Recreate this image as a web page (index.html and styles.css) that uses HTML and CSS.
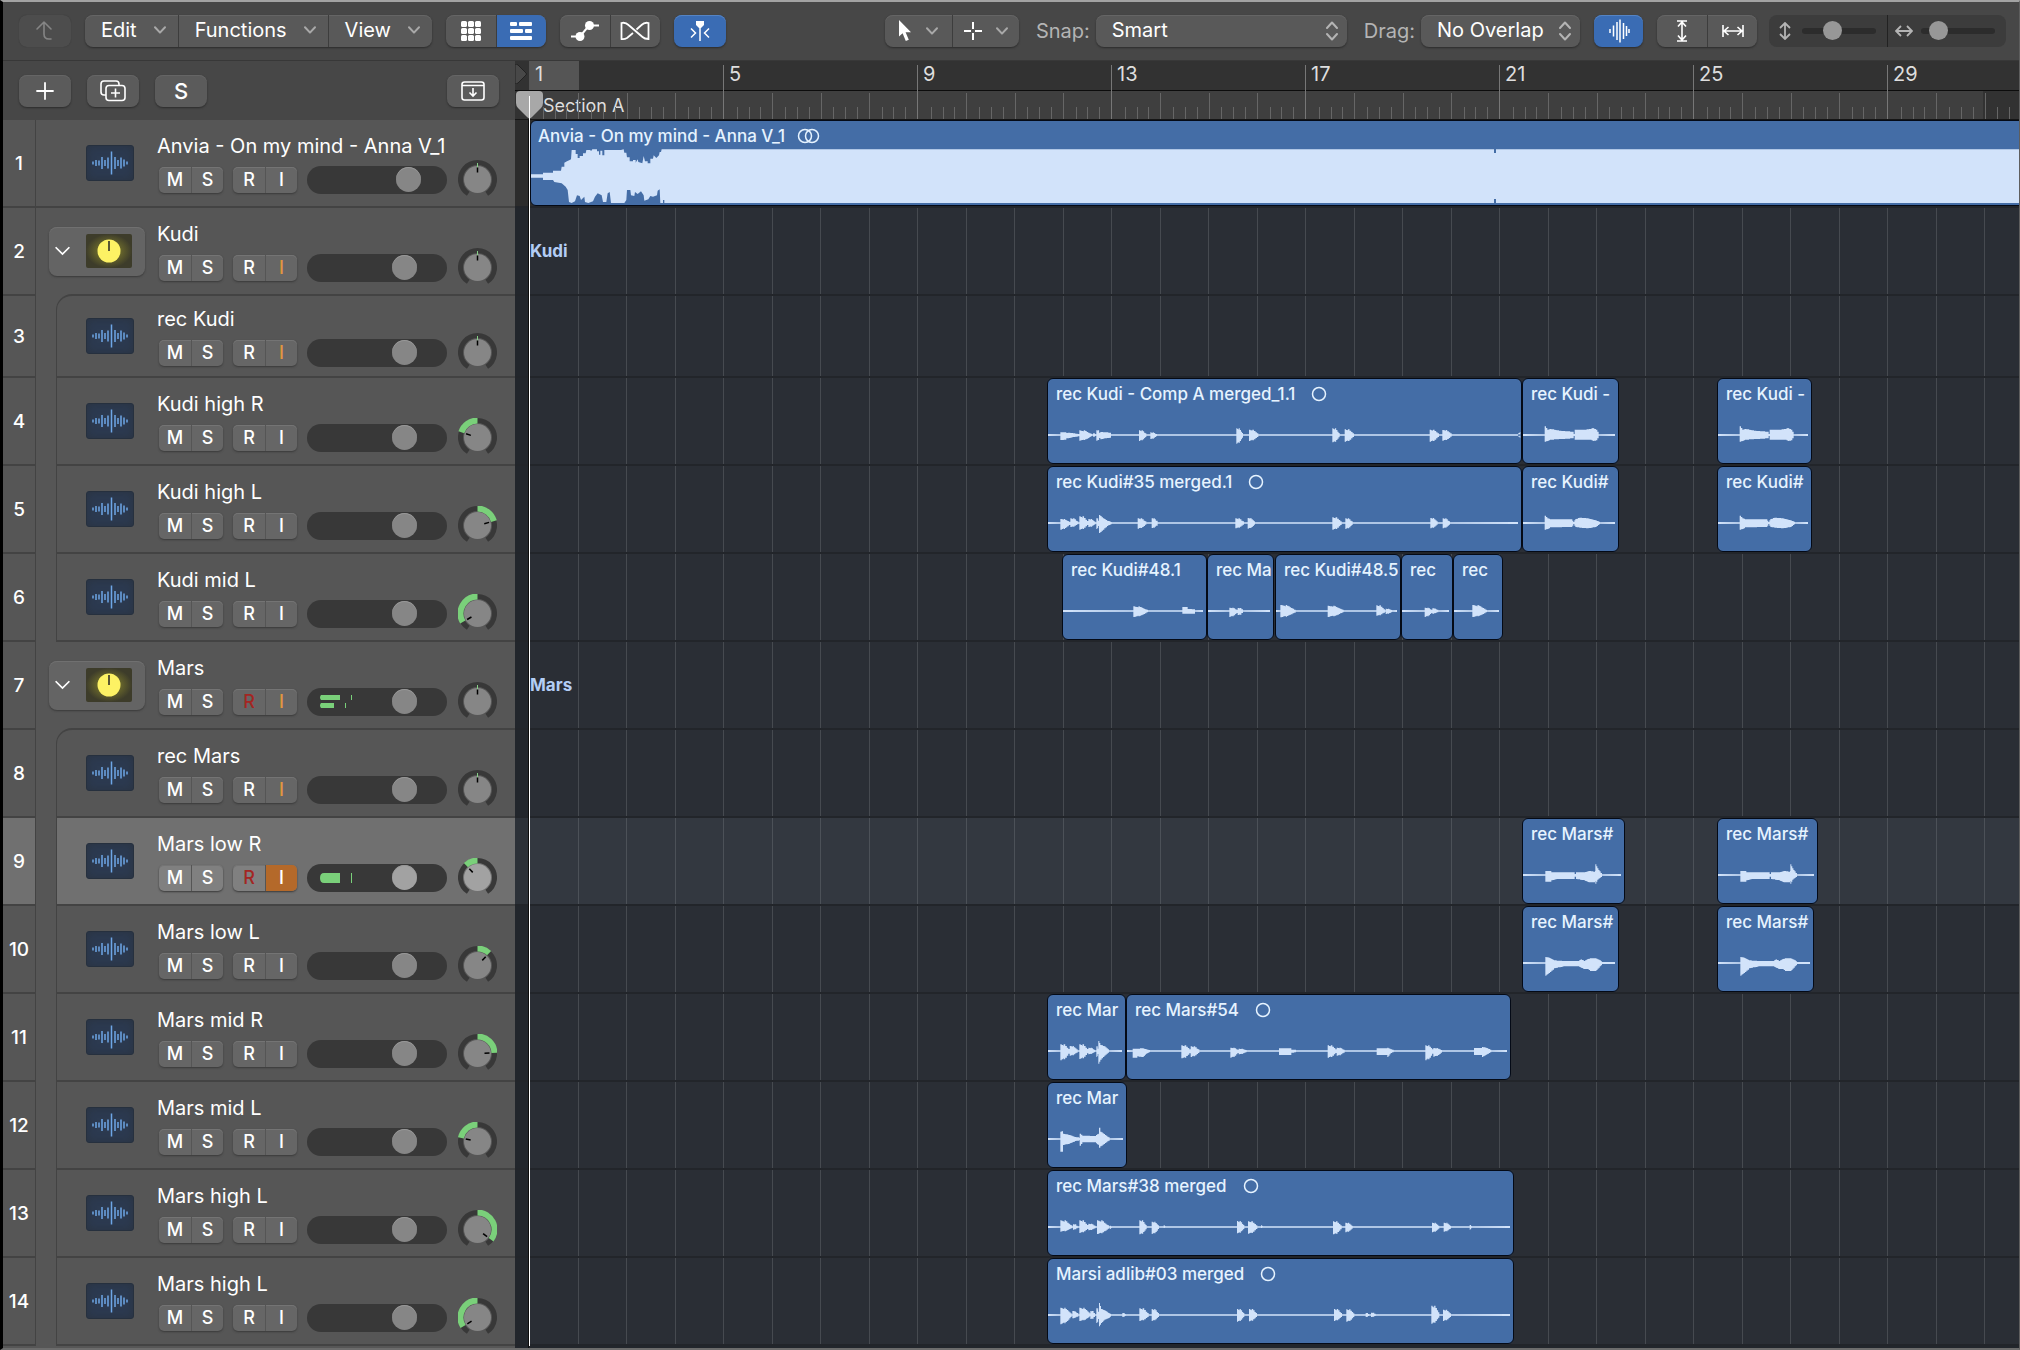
FILE: index.html
```html
<!DOCTYPE html>
<html lang="en">
<head>
<meta charset="utf-8">
<title>Tracks</title>
<link rel="stylesheet" href="styles.css">
</head>
<body>
<svg class="defs" aria-hidden="true">
  <symbol id="i-chev" viewBox="0 0 12 8"><path d="M1 1.2 6 6.6 11 1.2" fill="none" stroke="currentColor" stroke-width="2" stroke-linecap="round" stroke-linejoin="round"/></symbol>
  <symbol id="i-updown" viewBox="0 0 12 20"><path d="M1 7 6 1.5 11 7M1 13l5 5.5 5-5.5" fill="none" stroke="currentColor" stroke-width="2" stroke-linecap="round" stroke-linejoin="round"/></symbol>
  <symbol id="i-wave" viewBox="0 0 48 36">
    <path d="M7 16.500v3M10 15v6M13 15.500v5M16 12v12M19 15v6M22 12.500v11M25.500 6.500v23M29 12v12M32 15v6M35 12.500v11M38 14.500v7M41 16.500v3" fill="none" stroke="currentColor" stroke-width="1.500"/>
  </symbol>
</svg>
<div class="app">
  <header class="toolbar">
    <button class="btn btn-off" aria-label="Go up" disabled><svg width="20" height="22" viewBox="0 0 20 22"><path d="M2 9 9 2l7 7M9 2v12q0 5 5 5h2" fill="none" stroke="currentColor" stroke-width="1.600" stroke-linecap="round" stroke-linejoin="round"/></svg></button>
    <div class="group">
      <button class="menu">Edit<svg width="12" height="8"><use href="#i-chev"/></svg></button>
      <button class="menu">Functions<svg width="12" height="8"><use href="#i-chev"/></svg></button>
      <button class="menu">View<svg width="12" height="8"><use href="#i-chev"/></svg></button>
    </div>
    <div class="group">
      <button class="tool" aria-label="Grid view"><svg width="20" height="20" viewBox="0 0 20 20" fill="currentColor"><rect width="6" height="6" rx="1.500"/><rect x="7" width="6" height="6" rx="1.500"/><rect x="14" width="6" height="6" rx="1.500"/><rect y="7" width="6" height="6" rx="1.500"/><rect x="7" y="7" width="6" height="6" rx="1.500"/><rect x="14" y="7" width="6" height="6" rx="1.500"/><rect y="14" width="6" height="6" rx="1.500"/><rect x="7" y="14" width="6" height="6" rx="1.500"/><rect x="14" y="14" width="6" height="6" rx="1.500"/></svg></button>
      <button class="tool on" aria-label="Tracks view"><svg width="24" height="18" viewBox="0 0 24 18" fill="currentColor"><rect x="1" width="7" height="4" rx="1"/><rect x="10" width="13" height="4" rx="1"/><rect x="1" y="7" width="13" height="4" rx="1"/><rect x="16" y="7" width="7" height="4" rx="1"/><rect x="1" y="14" width="22" height="4" rx="1"/></svg></button>
    </div>
    <div class="group">
      <button class="tool" aria-label="Automation"><svg width="30" height="20" viewBox="0 0 30 20"><path d="M1 15.500h9L19 4.500h10" fill="none" stroke="currentColor" stroke-width="2"/><circle cx="10" cy="15.500" r="4.500" fill="currentColor"/><circle cx="19.500" cy="4.500" r="4.500" fill="currentColor"/></svg></button>
      <button class="tool" aria-label="Flex"><svg width="30" height="20" viewBox="0 0 30 20"><path d="M13 12 7 17Q4.500 18.500 1.500 18V2q4-1 7 2l14 12q2 2 6 2V2q-4-1-7 2l-5 4.500" fill="none" stroke="currentColor" stroke-width="1.800"/></svg></button>
    </div>
    <button class="btn on" aria-label="Catch playhead"><svg width="22" height="22" viewBox="0 0 22 22"><path d="M7 1h8v4l-3 3h-2L7 5z" fill="currentColor"/><path d="M11 6v15M2 8.500l4.500 4.500L2 17.500M20 8.500 15.500 13l4.500 4.500" fill="none" stroke="currentColor" stroke-width="1.500"/></svg></button>

    <div class="group right">
      <button class="tool wide" aria-label="Pointer tool"><svg width="14" height="22" viewBox="0 0 14 22"><path d="M1 0v16.500l3.600-3.300 3.200 7.800 3-1.200-3.200-7.600H13z" fill="currentColor"/></svg><svg class="dim" width="12" height="8"><use href="#i-chev"/></svg></button>
      <button class="tool wide" aria-label="Marquee tool"><svg width="18" height="18" viewBox="0 0 18 18"><path d="M9 0v7M9 11v7M0 9h7M11 9h7" stroke="currentColor" stroke-width="2"/></svg><svg class="dim" width="12" height="8"><use href="#i-chev"/></svg></button>
    </div>
    <label class="field" for="snap">Snap:
      <span class="pick pick-wide"><select id="snap"><option>Smart</option></select><svg width="12" height="20"><use href="#i-updown"/></svg></span>
    </label>
    <label class="field" for="drag">Drag:
      <span class="pick"><select id="drag"><option>No Overlap</option></select><svg width="12" height="20"><use href="#i-updown"/></svg></span>
    </label>
    <button class="btn slim on" aria-label="Waveform zoom"><svg width="22" height="24" viewBox="0 0 22 24"><path d="M2 10v4M5.500 6.500v11M9 3v18M12 .500v23M15.500 4v16M18.500 7v10M21 10v4" stroke="currentColor" stroke-width="1.500"/></svg></button>
    <div class="group">
      <button class="tool" aria-label="Zoom vertically"><svg width="12" height="22" viewBox="0 0 12 22"><path d="M1 1h10M1 21h10M6 2v18M2 6.500 6 2l4 4.500M2 15.500 6 20l4-4.500" fill="none" stroke="currentColor" stroke-width="1.600"/></svg></button>
      <button class="tool" aria-label="Zoom horizontally"><svg width="22" height="12" viewBox="0 0 22 12"><path d="M1 0v12M21 0v12M2 6h18M6.500 2 2 6l4.500 4M15.500 2 20 6l-4.500 4" fill="none" stroke="currentColor" stroke-width="1.600"/></svg></button>
    </div>
    <div class="zooms">
      <label><svg width="18" height="18" viewBox="0 0 18 18"><path d="M9 1v16M4 6l5-5 5 5M4 12l5 5 5-5" fill="none" stroke="currentColor" stroke-width="1.800"/></svg><input class="zoom" type="range" value="38" aria-label="Vertical zoom"></label>
      <label><svg width="18" height="18" viewBox="0 0 18 18"><path d="M1 9h16M6 4 1 9l5 5M12 4l5 5-5 5" fill="none" stroke="currentColor" stroke-width="1.800"/></svg><input class="zoom" type="range" value="14" aria-label="Horizontal zoom"></label>
    </div>
  </header>

  <main class="main">
    <section class="side" aria-label="Track headers">
      <div class="side-bar">
        <button class="btn" aria-label="Add track"><svg width="18" height="18" viewBox="0 0 18 18"><path d="M9 1v16M1 9h16" stroke="currentColor" stroke-width="1.800" stroke-linecap="round"/></svg></button>
        <button class="btn" aria-label="Duplicate track"><svg width="26" height="22" viewBox="0 0 26 22"><path d="M6 15H4q-3 0-3-3V4q0-3 3-3h12q3 0 3 3v1" fill="none" stroke="currentColor" stroke-width="1.600"/><rect x="6" y="5.500" width="19" height="15" rx="3" fill="none" stroke="currentColor" stroke-width="1.600"/><path d="M15.500 8.500v9M11 13h9" stroke="currentColor" stroke-width="1.600"/></svg></button>
        <button class="btn solo">S</button>
        <button class="btn right" aria-label="Header options"><svg width="24" height="20" viewBox="0 0 24 20"><rect x="1" y="1" width="22" height="18" rx="2.500" fill="none" stroke="currentColor" stroke-width="1.600"/><path d="M1 4.500h22M12 7v8M8.500 11.500 12 15l3.500-3.500" fill="none" stroke="currentColor" stroke-width="1.600"/></svg></button>
      </div>
      <div id="headers"></div>
    </section>
    <section class="time" aria-label="Timeline">
      <div class="ruler">
        <div class="numbers" id="numbers"></div>
        <div class="markers"><span class="marker">Section A</span></div>
        <div class="ticks" id="ticks"></div>
        <svg class="start" width="12" height="20" viewBox="0 0 12 20"><path d="M0 0q2 0 3 1l8 8q1 1 0 2l-8 8q-1 1-3 1z" fill="#484848" stroke="#222"/></svg>
      </div>
      <div class="lanes">
        <div class="gridlines" id="gridlines"></div>
        <div id="lanes"></div>
      </div>
      <div class="playhead"><svg width="27" height="28" viewBox="0 0 27 28"><path d="M4 0h19q4 0 4 4v8q0 3-2 5l-9 9q-2.500 2.500-5 0l-9-9q-2-2-2-5V4q0-4 4-4z" fill="#a8a8a8"/></svg></div>
    </section>
  </main>
</div>
<script src="tracks.js"></script>
</body>
</html>
```
FILE: styles.css
```css
* { box-sizing: border-box; }
:root {
  --row: 88px;
  --row-short: 82px;
  --panel: #565656;
  --bar: #474747;
  --line: #434343;
  --blue: #3a6cb4;
  --font: Inter, "Liberation Sans", sans-serif;
}
body { margin: 0; background: #000; color: #fff; font-family: var(--font); font-size: 20px; }
button, select, input { font: inherit; color: inherit; margin: 0; }
button { border: 0; padding: 0; background: none; }
svg { display: block; flex: none; }
.defs { position: absolute; width: 0; height: 0; }
.app {
  display: flex; flex-direction: column; min-height: 100vh; overflow: hidden;
  border-top: 2px solid #a3a3a3; border-left: 3px solid #000;
  border-right: 1px solid #5e5e5e; border-bottom: 2px solid #6c6c6c;
}

/* toolbar */
.toolbar {
  display: flex; align-items: center; gap: 14px; height: 59px;
  padding: 0 13px 0 16px; background: var(--bar); border-bottom: 1px solid #383838;
}
.right { margin-left: auto; }
.btn, .group {
  display: flex; align-items: center; justify-content: center; height: 32px;
  background: #595959; border-radius: 8px; box-shadow: 0 1px 2px #2c2c2c, inset 0 1px 0 #656565;
}
.btn { width: 52px; }
.slim { width: 49px; }
.btn-off { background: #4d4d4d; color: #858585; box-shadow: 0 0 1px #333; }
.btn.on, .tool.on { background: var(--blue); }
.btn.on { box-shadow: 0 1px 2px #2c2c2c, inset 0 1px 0 #5584c4; }
.group { overflow: hidden; }
.group > * + * { border-left: 1px solid #3d3d3d; }
.menu, .tool { display: flex; align-items: center; justify-content: center; height: 32px; }
.menu { gap: 17px; padding: 0 12px 2px 16px; }
.menu svg, .dim { color: #a8a8a8; }
.tool { width: 50px; }
.wide { width: 67px; gap: 14px; }
.field { display: flex; align-items: center; gap: 6px; color: #b4b4b4; padding-left: 3px; }
.pick { position: relative; width: 159px; color: #fff; }
.pick-wide { width: 251px; }
.pick select {
  appearance: none; display: block; width: 100%; height: 32px; padding: 0 30px 2px 16px; border: 0;
  border-radius: 8px; background: #595959; box-shadow: 0 1px 2px #2c2c2c, inset 0 1px 0 #656565;
}
.pick svg { position: absolute; right: 9px; top: 6px; color: #b4b4b4; pointer-events: none; }
.zooms { display: flex; height: 32px; margin-left: -2px; border-radius: 8px; background: #3c3c3c; }
.zooms label { display: flex; align-items: center; gap: 8px; padding: 0 11px 0 7px; color: #b4b4b4; }
.zooms label + label { border-left: 1px solid #222; }
.zoom { appearance: none; width: 74px; height: 20px; background: none; }
.zoom::-webkit-slider-runnable-track { height: 6px; border-radius: 3px; background: #2c2c2c; }
.zoom::-webkit-slider-thumb { appearance: none; width: 19px; height: 19px; margin-top: -7px; border-radius: 50%; background: #979797; }

.main { display: flex; flex: 1; }

/* track headers */
.side { width: 512px; flex: none; background: var(--panel); }
.side-bar { display: flex; align-items: center; gap: 16px; height: 59px; padding: 0 16px; background: var(--bar); }
.side-bar .btn { background: #5b5b5b; }
.solo { font-size: 22px; font-weight: 500; }
.track { display: flex; height: var(--row); }
.short { height: var(--row-short); }
.num {
  display: flex; align-items: center; justify-content: center; width: 33px; flex: none; font-size: 19px; font-weight: 500;
  border-right: 1px solid var(--line); border-bottom: 2px solid var(--line);
}
.body { display: flex; flex: 1; align-items: center; border-bottom: 2px solid var(--line); padding-left: 50px; }
.parent .body { padding-left: 13px; }
.opens .body { border-bottom-color: transparent; }
.child .body { margin-left: 20px; padding-left: 29px; border-left: 1px solid var(--line); }
.first .body { margin-top: -2px; border-top: 2px solid var(--line); border-top-left-radius: 16px; }
.picked .num, .picked .body { background: #707070; }
.icon {
  width: 48px; height: 36px; margin-right: 23px; border-radius: 3px; color: #6ea6e6;
  background: #2c3a50; border: 1px solid #26303e; box-shadow: inset 0 0 8px #2a3340;
}
.icon svg { margin: -1px; }
.stack {
  display: flex; align-items: center; gap: 16px; width: 96px; height: 49px; margin-right: 12px; padding-left: 6px;
  background: #646464; border-radius: 8px; box-shadow: 0 1px 2px #3a3a3a, inset 0 1px 0 #707070;
}
.ctl { display: flex; flex-direction: column; padding-top: 7px; }
.name { height: 26px; line-height: 24px; }
.row { display: flex; align-items: center; height: 39px; padding-left: 2px; }
.pair { display: flex; height: 26px; margin-right: 10px; background: #666; border-radius: 5px; overflow: hidden; box-shadow: 0 1px 2px #3a3a3a, inset 0 1px 0 #747474; }
.pair button { width: 32px; font-size: 18px; font-weight: 500; }
.pair button + button { border-left: 1px solid #555; }
.amber { color: #e2963f; }
.red { color: #a32622; }
.pair .lit { background: #b4692a; }
.picked .pair { background: #808080; }
.vol { position: relative; width: 140px; height: 28px; margin-right: 11px; border-radius: 14px; background: #383838; }
.vol input { appearance: none; display: block; width: 138px; height: 28px; margin: 0 1px; background: none; }
.vol input::-webkit-slider-thumb { appearance: none; width: 25px; height: 25px; border-radius: 50%; background: #868686; box-shadow: inset 0 1px 0 #979797; }
.picked .vol input::-webkit-slider-thumb { background: #a2a2a2; }
.vol svg { position: absolute; left: 12px; top: 7px; pointer-events: none; }
.knob circle { fill: #868686; }
.picked .knob circle { fill: #a2a2a2; }

/* timeline */
.time { position: relative; flex: 1; min-width: 0; overflow: hidden; background: #22262c; }
.ruler { position: relative; height: 59px; padding-left: 14px; background: #323232; overflow: hidden; border-bottom: 1px solid #161616; }
.numbers { display: flex; height: 30px; border-bottom: 1px solid #0c0c0c; margin-left: -14px; padding-left: 14px; }
.block { display: flex; width: 194px; flex: none; }
.numbers .block { padding: 0 0 0 6px; line-height: 26px; color: #dedede; }
.cycle { width: 50px; margin-left: -6px; padding-left: 6px; background: #555; }
.markers { display: flex; align-items: center; height: 29px; margin-right: 36px; padding-left: 14px; background: #3f3f3f; }
.marker { font-size: 18px; color: #dedede; }
.ticks { position: absolute; left: 14px; top: 4px; bottom: 0; display: flex; pointer-events: none; }
.ticks .block { border-left: 1px solid #777; }
.ticks .block:first-child { border-color: transparent; }
.bar { flex: 1; display: flex; margin-top: 28px; border-left: 1px solid #666; }
.bar:first-child { border-color: transparent; }
.bar i { flex: 1; margin-top: 14px; border-left: 1px solid #666; }
.bar i:first-child { border-color: transparent; }
.start { position: absolute; left: 0; top: 3px; }
.lanes { position: relative; padding-left: 15px; }
.gridlines { position: absolute; left: 14px; top: 0; bottom: 0; display: flex; background: #2a2e35; }
.gridlines .bar { margin: 0; border-left: 1px solid #464a50; }
.lane { position: relative; height: var(--row); margin-left: -15px; padding-left: 15px; border-bottom: 2px solid #22252a; }
.lane.short { height: var(--row-short); }
.lane.picked { background: rgba(120, 130, 150, .12); }
.lane:first-child { background: #2c2c2c; }
.lane-name { display: flex; align-items: center; height: 100%; font-size: 17px; font-weight: 700; color: #b3cdf5; }
.clip {
  position: absolute; top: 0; bottom: 0; overflow: hidden; background: #446da6; color: #e6f3ff;
  border: 1px solid #040a16; border-radius: 6px;
}
.clip.long { right: -8px; }
.clip-name { display: flex; align-items: center; gap: 16px; height: 30px; padding-left: 8px; font-size: 17px; font-weight: 500; white-space: nowrap; }
.long .clip-name { gap: 12px; padding-left: 7px; }
.clip .wave { position: absolute; left: 0; top: 0; fill: #d2e3fa; }
.playhead { position: absolute; left: 1px; top: 30px; bottom: 2px; width: 27px; pointer-events: none; }
.playhead::after { content: ""; position: absolute; left: 13px; top: 5px; bottom: 0; width: 1px; background: #fff; box-shadow: -1px 24px 0 #0c0c0c; }
```
FILE: tracks.js
```js
// One attack-and-decay burst: x, width, height above and below the centre line.
const b = (x, w, u, d) =>
  `${x},2,2 ${x},${u},${d} ${x + w * 0.3},${u * 0.8},${d * 0.8} ${x + w * 0.35},${u},${d * 0.9} ${x + w * 0.7},${u * 0.5},${d * 0.5} ${x + w},2,2 `;

// Envelopes are lists of "x,above,below", three units to the pixel.
const highPair = '68,2,2 68,26,20 76,16,18 84,18,14 100,15,13 118,12,12 152,10,10 155,3,3 158,16,14 190,16,14 205,18,14 212,21,18 222,16,16 226,10,10 230,2,2';
const lowPair = '68,2,2 68,22,20 76,14,18 84,11,13 148,11,12 154,3,3 160,12,12 172,16,14 196,14,16 220,8,12 232,3,3 234,2,2';
const marsR = '70,2,2 70,12,20 84,12,20 88,8,16 104,8,12 154,8,12 158,3,5 162,8,12 186,8,16 200,12,22 214,10,22 219,12,18 220,32,26 226,20,14 236,6,6 240,2,2';
const marsL = '70,2,2 70,18,38 80,16,30 96,8,16 124,6,10 168,6,10 176,11,14 186,6,18 196,12,18 204,14,24 220,14,24 230,10,14 240,3,3';
const adlib = b(40, 34, 22, 28) + b(76, 18, 12, 10) + b(97, 34, 22, 18) + b(130, 14, 12, 12) + b(148, 8, 20, 24) + '156,36,34 162,18,24 172,14,14 186,5,8 192,2,2 ';

const tracks = [
  { name: 'Anvia - On my mind - Anna V_1', vol: 78, clips: [{ x: 0, name: 'Anvia - On my mind - Anna V_1', full: true }] },
  { name: 'Kudi', parent: true, i: 'amber' },
  { name: 'rec Kudi', child: true, first: true, short: true, i: 'amber' },
  { name: 'Kudi high R', child: true, pan: -72, clips: [
    { x: 517, w: 475, name: 'rec Kudi - Comp A merged_1.1', loop: true, env: '40,2,2 40,8,15 54,8,14 58,6,10 66,7,9 78,5,6 92,3,4 ' + b(97, 38, 14, 17) + b(138, 8, 5, 5) + b(148, 12, 14, 17) + '160,9,13 172,8,10 188,7,8 192,2,2 ' + b(276, 22, 14, 18) + b(310, 20, 8, 12) + b(568, 20, 20, 26) + b(606, 28, 16, 18) + b(856, 22, 20, 22) + b(893, 28, 17, 20) + b(1148, 28, 16, 20) + b(1186, 28, 15, 17) + '1410,2,2 1418,9,8 1420,2,2' },
    { x: 992, w: 97, name: 'rec Kudi -', env: highPair },
    { x: 1187, w: 95, name: 'rec Kudi -', env: highPair } ] },
  { name: 'Kudi high L', child: true, pan: 75, clips: [
    { x: 517, w: 475, name: 'rec Kudi#35 merged.1', loop: true, env: b(40, 30, 12, 20) + b(70, 24, 14, 12) + b(97, 27, 20, 20) + b(124, 22, 12, 12) + b(148, 8, 14, 18) + '156,24,30 168,14,20 180,7,9 194,2,2 ' + b(272, 26, 14, 17) + b(314, 18, 14, 15) + b(565, 26, 14, 16) + b(602, 22, 15, 17) + b(856, 28, 17, 20) + b(895, 22, 14, 18) + b(1150, 22, 15, 16) + b(1187, 22, 14, 16) },
    { x: 992, w: 97, name: 'rec Kudi#', env: lowPair },
    { x: 1187, w: 95, name: 'rec Kudi#', env: lowPair } ] },
  { name: 'Kudi mid L', child: true, pan: -120, clips: [
    { x: 532, w: 145, name: 'rec Kudi#48.1', env: b(214, 44, 14, 18) + '361,2,2 361,12,8 375,12,8 377,6,8 398,5,8 399,2,2' },
    { x: 677, w: 67, name: 'rec Ma', env: b(67, 25, 10, 18) + b(92, 16, 9, 12) },
    { x: 745, w: 126, name: 'rec Kudi#48.5', env: b(16, 46, 18, 19) + b(158, 48, 16, 18) + b(304, 26, 17, 14) + b(332, 20, 7, 9) },
    { x: 871, w: 52, name: 'rec', env: b(71, 23, 10, 18) + b(94, 18, 8, 8) },
    { x: 923, w: 50, name: 'rec', env: b(58, 44, 18, 18) } ] },
  { name: 'Mars', parent: true, r: 'red', i: 'amber', meter: 'stereo' },
  { name: 'rec Mars', child: true, first: true, i: 'amber' },
  { name: 'Mars low R', child: true, picked: true, r: 'red', i: 'lit', pan: -43, meter: 'mono', clips: [
    { x: 992, w: 103, name: 'rec Mars#', env: marsR },
    { x: 1187, w: 101, name: 'rec Mars#', env: marsR } ] },
  { name: 'Mars low L', child: true, pan: 43, clips: [
    { x: 992, w: 97, name: 'rec Mars#', env: marsL },
    { x: 1187, w: 97, name: 'rec Mars#', env: marsL } ] },
  { name: 'Mars mid R', child: true, pan: 88, clips: [
    { x: 517, w: 79, name: 'rec Mar', env: b(40, 28, 20, 28) + b(68, 24, 15, 14) + b(97, 27, 20, 24) + b(124, 20, 10, 10) + b(148, 6, 14, 18) + '154,30,38 160,18,26 172,14,14 186,2,2' },
    { x: 596, w: 385, name: 'rec Mars#54', loop: true, env: '20,2,2 20,7,20 32,7,20 34,7,16 50,8,18 60,5,8 72,2,2 ' + b(166, 28, 17, 22) + b(194, 26, 14, 18) + b(313, 25, 10, 20) + b(338, 24, 7, 10) + '459,2,2 459,8,12 494,8,12 496,4,5 509,4,4 510,2,2 ' + b(605, 27, 17, 20) + b(632, 24, 10, 14) + '752,2,2 752,8,12 780,8,12 784,10,18 794,5,6 803,2,2 ' + b(898, 24, 17, 28) + b(922, 26, 9, 17) + '1044,2,2 1044,9,12 1064,9,12 1068,12,18 1082,9,10 1096,2,2' } ] },
  { name: 'Mars mid L', child: true, pan: -78, clips: [
    { x: 517, w: 80, name: 'rec Mar', env: '40,2,2 40,22,38 47,24,38 48,16,18 66,12,14 84,6,6 96,4,4 98,16,20 106,10,10 144,9,10 150,14,16 154,16,18 156,34,26 160,22,22 174,12,12 188,2,2' } ] },
  { name: 'Mars high L', child: true, pan: 127, clips: [
    { x: 517, w: 467, name: 'rec Mars#38 merged', loop: true, env: b(40, 36, 20, 14) + b(78, 14, 8, 8) + b(97, 27, 20, 18) + b(124, 22, 10, 10) + b(150, 36, 20, 21) + b(188, 6, 4, 6) + b(277, 22, 20, 22) + b(314, 22, 16, 21) + b(350, 5, 5, 3) + b(570, 22, 18, 19) + b(603, 28, 17, 20) + b(642, 5, 5, 3) + b(858, 26, 17, 22) + b(895, 22, 13, 16) + b(1155, 22, 13, 16) + b(1190, 22, 13, 14) + b(1268, 6, 6, 8) } ] },
  { name: 'Mars high L', child: true, pan: -122, clips: [
    { x: 517, w: 467, name: 'Marsi adlib#03 merged', loop: true, env: adlib + b(226, 10, 6, 6) + b(277, 28, 20, 18) + b(314, 22, 18, 18) + b(570, 22, 18, 20) + b(606, 24, 18, 19) + b(861, 24, 18, 18) + b(898, 24, 17, 20) + b(956, 10, 6, 6) + b(972, 14, 7, 6) + b(1153, 24, 28, 26) + b(1188, 24, 16, 18) } ] },
];

const fullMix = 'M0 523 36 523 36 518 66 518 66 512 90 512 92 500 100 500 100 488 108 484 116 480 120 478 122 450 134 450 134 462 140 462 140 474 146 474 146 468 156 468 156 460 164 460 166 450 178 450 180 454 184 448 198 448 198 454 204 454 204 464 208 464 208 452 214 452 214 466 220 466 220 450 270 450 278 448 280 458 286 458 288 472 296 472 296 484 306 484 306 480 314 480 314 488 320 478 322 486 334 490 338 468 342 484 350 484 350 490 358 490 358 476 366 476 368 466 376 474 384 466 386 456 390 456 392 448 4500 448 4500 609 400 609 400 600 396 600 396 609 388 609 386 568 380 572 378 586 366 590 358 588 352 598 340 602 338 586 330 574 320 582 312 576 310 588 300 586 298 570 288 570 286 600 280 609 240 609 236 576 230 580 226 606 216 606 212 586 200 580 192 590 186 604 172 609 162 606 160 590 150 600 146 588 138 586 132 604 122 609 114 606 110 570 104 560 92 550 70 546 66 540 36 540 36 533 0 533z';

const polar = (r, deg) => {
  const a = (deg - 90) * Math.PI / 180;
  return `${(r * Math.cos(a)).toFixed(2)} ${(r * Math.sin(a)).toFixed(2)}`;
};
const arc = (from, to) => `M${polar(17, from)}A17 17 0 ${to - from > 180 ? 1 : 0} 1 ${polar(17, to)}`;

function knob(pan = 0) {
  const value = pan
    ? `<path d="${arc(Math.min(0, pan), Math.max(0, pan))}" fill="none" stroke="#7ad07a" stroke-width="6"/>`
    : '';
  return `<svg class="knob" width="39" height="39" viewBox="-19.500 -19.500 39 39" role="img" aria-label="Pan">
    <path d="${arc(-147, 147)}" fill="none" stroke="#383838" stroke-width="5"/>${value}
    <circle r="13.500"/>${pan ? '' : '<path d="M0-16.500V-12" stroke="#86cf86"/>'}
    <path d="M${polar(12, pan)}L${polar(7, pan)}" stroke="#000" stroke-width="1.500"/></svg>`;
}

const meters = {
  stereo: '<path d="M2 0h19v5H2q-2-2.500 0-5M2 8h13v5H2q-2-2.500 0-5M32 0h1v5h-1M26 8h1v5h-1"/>',
  mono: '<path d="M5 2h16v10H5Q1 12 1 7t4-5M32 2h1v10h-1"/>',
};

const stackIcon = '<svg width="46" height="34" viewBox="0 0 46 34"><defs><radialGradient id="glow"><stop offset="0.400" stop-color="#6f6d2c"/><stop offset="1" stop-color="#3d3c2a"/></radialGradient></defs><rect width="46" height="34" rx="2" fill="url(#glow)"/><circle cx="23" cy="17" r="11.500" fill="#fdf264"/><path d="M23 7v10" stroke="#222" stroke-width="1.500"/></svg>';

function header(t, n) {
  const cls = ['track', t.parent && 'parent opens', t.child && 'child', t.first && 'first', t.short && 'short', t.picked && 'picked'].filter(Boolean).join(' ');
  const icon = t.parent
    ? `<button class="stack" aria-label="Collapse ${t.name}"><svg width="15" height="10" viewBox="0 0 12 8"><path d="M.500 1 6 6.500 11.500 1" fill="none" stroke="#fff" stroke-width="1.400"/></svg>${stackIcon}</button>`
    : '<span class="icon"><svg width="48" height="36"><use href="#i-wave"/></svg></span>';
  return `<div class="${cls}"><div class="num">${n + 1}</div><div class="body">${icon}<div class="ctl">
    <span class="name">${t.name}</span>
    <div class="row"><div class="pair"><button>M</button><button>S</button></div>
    <div class="pair"><button class="${t.r || ''}">R</button><button class="${t.i || ''}">I</button></div>
    <div class="vol"><input type="range" value="${t.vol || 74}" aria-label="${t.name} volume">${t.meter ? `<svg width="34" height="14" fill="#7ad07a">${meters[t.meter]}</svg>` : ''}</div>
    ${knob(t.pan)}</div></div></div></div>`;
}

// Turn envelope points into stepped columns, four units wide.
function steps(pts) {
  const out = [];
  for (let i = 0; i < pts.length - 1; i++) {
    const [x0, u0, d0] = pts[i];
    const [x1, u1, d1] = pts[i + 1];
    const n = Math.max(1, Math.round((x1 - x0) / 4));
    for (let k = 0; k < n; k++) {
      const f = k / n;
      const g = (k + 1) / n;
      const u = Math.round(u0 + (u1 - u0) * f);
      const d = Math.round(d0 + (d1 - d0) * f);
      out.push([x0 + (x1 - x0) * f, u, d], [x0 + (x1 - x0) * g, u, d]);
    }
  }
  out.push(pts[pts.length - 1]);
  return out;
}

function wave(c) {
  if (c.full) {
    return `<svg class="wave" width="1700" height="86"><g transform="translate(0 -121) scale(.33333)"><path d="${fullMix}"/></g><path d="M963 28h2v4h-2M963 78h2v4h-2" fill="#446da6"/></svg>`;
  }
  const pts = steps(c.env.trim().split(/\s+/).map(p => p.split(',').map(Number)));
  const end = (c.w - 4) * 3;
  const top = pts.map(p => `${p[0]} ${-p[1]}`).join(' ');
  const low = pts.reverse().map(p => `${p[0]} ${p[2]}`).join(' ');
  return `<svg class="wave" width="${c.w}" height="84"><g transform="translate(-1 56) scale(.33333)"><path d="M3-3 ${top} ${end}-3 ${end} 3 ${low} 3 3z"/></g></svg>`;
}

function clip(c) {
  const ring = '<svg width="16" height="16"><circle cx="8" cy="8" r="6.500" fill="none" stroke="currentColor" stroke-width="1.500"/></svg>';
  const rings = '<svg width="23" height="16"><g fill="none" stroke="currentColor" stroke-width="1.500"><circle cx="8" cy="8" r="6.500"/><circle cx="15" cy="8" r="6.500"/></g></svg>';
  const style = `left:${15 + c.x}px` + (c.w ? `;width:${c.w}px` : '');
  return `<div class="clip${c.full ? ' long' : ''}" style="${style}">${wave(c)}<div class="clip-name">${c.name}${c.loop ? ring : c.full ? rings : ''}</div></div>`;
}

function lane(t) {
  const cls = ['lane', t.short && 'short', t.picked && 'picked'].filter(Boolean).join(' ');
  return `<div class="${cls}">${t.parent ? `<span class="lane-name">${t.name}</span>` : ''}${(t.clips || []).map(clip).join('')}</div>`;
}

const fill = (id, html) => { document.getElementById(id).innerHTML = html; };
const blocks = [1, 5, 9, 13, 17, 21, 25, 29];
fill('headers', tracks.map(header).join(''));
fill('lanes', tracks.map(lane).join(''));
fill('numbers', blocks.map(n => `<div class="block">${n === 1 ? '<span class="cycle">1</span>' : n}</div>`).join(''));
fill('ticks', blocks.map(() => `<div class="block">${'<div class="bar"><i></i><i></i><i></i><i></i></div>'.repeat(4)}</div>`).join(''));
fill('gridlines', blocks.map(() => `<div class="block">${'<div class="bar"></div>'.repeat(4)}</div>`).join(''));
```
